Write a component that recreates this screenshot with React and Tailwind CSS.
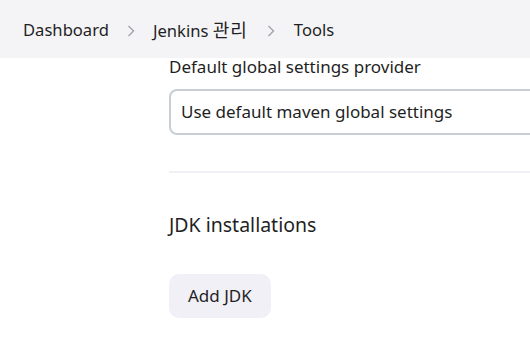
export default function App() {
  const font = { fontFamily: '"Noto Sans", "Noto Sans CJK KR", sans-serif' };
  const Chevron = () => (
    <span className="mx-[17px] text-[#a0a0aa] flex items-center">
      <svg width="10" height="14" viewBox="0 0 10 14" fill="none" stroke="currentColor" strokeWidth="1.3">
        <path d="M2.5 2 L7.5 7 L2.5 12" />
      </svg>
    </span>
  );
  return (
    <div className="w-[530px] h-[347px] overflow-hidden bg-white text-[#1f1f24]" style={font}>
      <div className="h-[58px] bg-[#f4f4f7] flex items-center pl-[23px] pt-[3px] text-[16.6px] text-[#1f1f24]">
        <span>Dashboard</span>
        <Chevron />
        <span>
          Jenkins <span className="text-[18px] tracking-[1px]">관리</span>
        </span>
        <span className="mx-[18px] text-[#a0a0aa] flex items-center">
          <svg width="10" height="14" viewBox="0 0 10 14" fill="none" stroke="currentColor" strokeWidth="1.3">
            <path d="M2.5 2 L7.5 7 L2.5 12" />
          </svg>
        </span>
        <span>Tools</span>
      </div>
      <div className="pl-[169px] w-[700px]">
        <div className="text-[17px] leading-[20px] mt-[-1px]">Default global settings provider</div>
        <div className="mt-[12px] h-[46px] border-2 border-[#c9ced6] rounded-[8px] flex items-center pl-[10px] text-[17px]">
          Use default maven global settings
        </div>
        <div className="mt-[36px] h-[2px] bg-[#f0f0f5]" />
        <div className="mt-[40px] text-[19.5px] leading-[24px]">JDK installations</div>
        <div className="mt-[37px]">
          <button className="h-[44px] px-[19px] rounded-[10px] bg-[#f0f0f6] text-[17px] text-[#1f1f24]">Add JDK</button>
        </div>
      </div>
    </div>
  );
}
